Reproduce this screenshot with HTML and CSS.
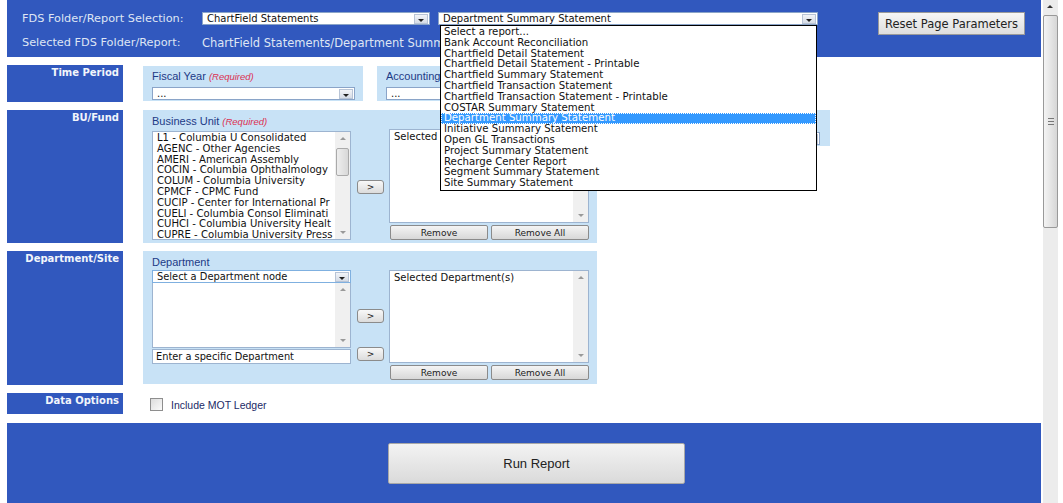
FILE: index.html
```html
<!DOCTYPE html>
<html lang="en">
<head>
  <meta charset="UTF-8" />
  <title>FDS Report Selection</title>
  <link rel="stylesheet" href="styles.css">
</head>
<body>
  <div class="page">
    <header class="top">
      <div class="top-row">
        <span class="top-label">FDS Folder/Report Selection:</span>
        <div class="combo folder-combo"><span class="combo-text">ChartField Statements</span><i class="arrow"></i></div>
        <div class="combo report-combo">
          <span class="combo-text">Department Summary Statement</span><i class="arrow"></i>
          <ul class="dropdown">
            <li>Select a report...</li>
            <li>Bank Account Reconciliation</li>
            <li>Chartfield Detail Statement</li>
            <li>Chartfield Detail Statement - Printable</li>
            <li>Chartfield Summary Statement</li>
            <li>Chartfield Transaction Statement</li>
            <li>Chartfield Transaction Statement - Printable</li>
            <li>COSTAR Summary Statement</li>
            <li class="picked">Department Summary Statement</li>
            <li>Initiative Summary Statement</li>
            <li>Open GL Transactions</li>
            <li>Project Summary Statement</li>
            <li>Recharge Center Report</li>
            <li>Segment Summary Statement</li>
            <li>Site Summary Statement</li>
          </ul>
        </div>
        <button class="reset">Reset Page Parameters</button>
      </div>
      <div class="top-row second">
        <span class="top-label">Selected FDS Folder/Report:</span>
        <span class="top-value">ChartField Statements/Department Summary Statement</span>
      </div>
    </header>

    <section class="group time-group">
      <div class="side-label">Time Period</div>
      <div class="panel small-panel">
        <div class="field-label">Fiscal Year <em>(Required)</em></div>
        <div class="combo field-combo"><span class="combo-text">...</span><i class="arrow"></i></div>
      </div>
      <div class="panel small-panel">
        <div class="field-label">Accounting Period <em>(Required)</em></div>
        <div class="combo field-combo"><span class="combo-text">...</span><i class="arrow"></i></div>
      </div>
    </section>

    <section class="group bu-group">
      <div class="side-label">BU/Fund</div>
      <div class="panel big-panel">
        <div class="field-label">Business Unit <em>(Required)</em></div>
        <div class="picker">
          <div class="list bu-list">
            <ul class="items">
              <li>L1 - Columbia U Consolidated</li>
              <li>AGENC - Other Agencies</li>
              <li>AMERI - American Assembly</li>
              <li>COCIN - Columbia Ophthalmology</li>
              <li>COLUM - Columbia University</li>
              <li>CPMCF - CPMC Fund</li>
              <li>CUCIP - Center for International Pr</li>
              <li>CUELI - Columbia Consol Eliminati</li>
              <li>CUHCI - Columbia University Healt</li>
              <li>CUPRE - Columbia University Press</li>
            </ul>
            <div class="vscroll"><span class="up"></span><span class="thumb bu-thumb"></span><span class="down"></span></div>
          </div>
          <button class="add bu-add">&gt;</button>
          <div class="chosen">
            <div class="list chosen-list bu-chosen">
              <ul class="items"><li>Selected Business Unit(s)</li></ul>
              <div class="vscroll"><span class="up"></span><span class="down"></span></div>
            </div>
            <div class="remove-row">
              <button class="remove">Remove</button>
              <button class="remove">Remove All</button>
            </div>
          </div>
        </div>
      </div>
      <div class="panel fund-panel">
        <div class="field-label">Fund</div>
        <div class="combo field-combo"><span class="combo-text">...</span><i class="arrow"></i></div>
      </div>
    </section>

    <section class="group dept-group">
      <div class="side-label">Department/Site</div>
      <div class="panel big-panel dept-panel">
        <div class="field-label">Department</div>
        <div class="picker">
          <div class="dept-left">
            <div class="combo node-combo"><span class="combo-text">Select a Department node</span><i class="arrow"></i></div>
            <div class="list dept-list">
              <ul class="items"></ul>
              <div class="vscroll"><span class="up"></span><span class="down"></span></div>
            </div>
            <div class="dept-input">Enter a specific Department</div>
          </div>
          <div class="add-col">
            <button class="add">&gt;</button>
            <button class="add">&gt;</button>
          </div>
          <div class="chosen">
            <div class="list chosen-list dept-chosen">
              <ul class="items"><li>Selected Department(s)</li></ul>
              <div class="vscroll"><span class="up"></span><span class="down"></span></div>
            </div>
            <div class="remove-row">
              <button class="remove">Remove</button>
              <button class="remove">Remove All</button>
            </div>
          </div>
        </div>
      </div>
    </section>

    <section class="group data-group">
      <div class="side-label">Data Options</div>
      <label class="check"><span class="box"></span>Include MOT Ledger</label>
    </section>

    <footer class="bottom">
      <button class="run">Run Report</button>
    </footer>
  </div>

  <div class="scrollbar">
    <span class="sb-up"></span>
    <span class="sb-thumb"><i></i></span>
  </div>
</body>
</html>
```

FILE: styles.css
```css
* { box-sizing: border-box; }
body { margin: 0; height: 503px; overflow: hidden; display: flex; background: #fff; font-family: "DejaVu Sans", Verdana, sans-serif; }
ul { list-style: none; margin: 0; padding: 0; }
button { font-family: "DejaVu Sans", Verdana, sans-serif; cursor: pointer; }

.page { width: 1041px; padding-left: 7px; flex: none; }

/* header */
.top { height: 57px; background: #3158be; padding: 12px 16px 0 15px; color: #dfe6f4; }
.top-row { display: flex; align-items: flex-start; height: 23px; }
.top-row.second { height: 14px; margin-top: 1px; }
.top-label { width: 180px; flex: none; font-size: 11.3px; line-height: 13px; white-space: nowrap; }
.second .top-label { line-height: 14px; }
.top-value { line-height: 14px; font-size: 11.5px; white-space: nowrap; }

.combo { position: relative; height: 13px; background: #fff; border: 1px solid #8aa4c8; display: flex; align-items: center; }
.combo-text { flex: 1; font-size: 10px; color: #111; padding-left: 4px; white-space: nowrap; overflow: hidden; line-height: 11px; }
.arrow { width: 14px; height: 10px; margin-right: 1px; border: 1px solid #b8c4d6; background: linear-gradient(#f2f4f8, #d6dce6); position: relative; flex: none; }
.arrow::after { content: ""; position: absolute; left: 3px; top: 4px; border-left: 3px solid transparent; border-right: 3px solid transparent; border-top: 3px solid #222; }
.folder-combo { width: 228px; }
.report-combo { width: 380px; margin-left: 8px; z-index: 5; }

.dropdown { position: absolute; top: 12px; left: 1px; right: 0; background: #fff; border: 1px solid #000; padding: 1px 0 1px; }
.dropdown li { font-size: 10.2px; line-height: 10.8px; height: 10.8px; padding-left: 3px; color: #111; white-space: nowrap; }
.dropdown li.picked { background: #3399ff; color: #fff; outline: 1px dotted #fff; outline-offset: -1px; }

.reset { margin-left: auto; width: 147px; height: 23px; border: 1px solid #9a9a9a; background: linear-gradient(#f6f6f6, #dedede); font-size: 11.5px; color: #222; padding: 0; }

/* rows */
.group { display: flex; gap: 20px; margin-top: 8px; align-items: flex-start; }
.side-label { width: 116px; flex: none; background: #3158be; color: #f2f5fb; font-weight: bold; font-size: 10px; text-align: right; padding: 2px 4px 0 0; }
.time-group .side-label { height: 37px; }
.bu-group .side-label { height: 133px; }
.dept-group .side-label { height: 134px; }
.data-group .side-label { height: 21px; }

.panel { background: #c8e2f6; padding: 4px 8px 0 9px; }
.field-label { font-family: "Liberation Sans", Arial, sans-serif; font-size: 11px; line-height: 14px; color: #1d3a86; white-space: nowrap; overflow: hidden; }
.field-label em { color: #dc3050; font-size: 9.5px; }

.small-panel { width: 220px; height: 35px; margin-top: 1px; padding-top: 3px; }
.time-group .small-panel + .small-panel { margin-left: -6px; }
.field-combo { margin-top: 3px; }

.big-panel { width: 454px; height: 133px; }
.fund-panel { width: 222px; height: 36px; margin-left: -9px; padding-top: 5px; padding-right: 10px; }

.picker { display: flex; align-items: flex-start; }
.list { position: relative; background: #fff; border: 1px solid #9db4d0; display: flex; }
.items { flex: 1; padding: 1px 0 0 4px; overflow: hidden; }
.items li { font-size: 10.1px; line-height: 10.8px; height: 10.8px; white-space: nowrap; color: #111; }
.vscroll { width: 15px; flex: none; background: #f0f0f0; position: relative; }
.vscroll .up, .vscroll .down { position: absolute; left: 5px; border-left: 3px solid transparent; border-right: 3px solid transparent; }
.vscroll .up { top: 5px; border-bottom: 3px solid #999; }
.vscroll .down { bottom: 5px; border-top: 3px solid #999; }
.thumb { position: absolute; left: 1px; right: 1px; border: 1px solid #aaa; border-radius: 2px; background: linear-gradient(90deg, #eee, #d8d8d8); }
.bu-thumb { top: 16px; height: 28px; }

.bu-list { width: 199px; height: 109px; margin-top: 2px; }
.add { width: 27px; height: 14px; margin-left: 6px; border: 1px solid #8b8b8b; border-radius: 3px; background: linear-gradient(#f8f8f8, #dcdcdc); font-size: 9px; line-height: 10px; padding: 0; color: #222; }
.bu-add { margin-top: 51px; }
.chosen { width: 200px; margin-left: 5px; }
.chosen-list .items li { font-size: 10px; line-height: 12px; }
.bu-chosen { height: 94px; }
.remove-row { display: flex; gap: 3px; margin-top: 2px; padding-left: 1px; }
.remove { flex: 1; height: 15px; border: 1px solid #8b8b8b; border-radius: 2px; background: linear-gradient(#f4f4f4, #d8d8d8); font-size: 9px; padding: 0; color: #222; }

.dept-left { width: 199px; margin-top: 1px; }
.node-combo { border-color: #7fb0e0; }
.node-combo .combo-text { font-size: 9.9px; }
.dept-list { height: 65px; border-top: none; }
.dept-input { height: 15px; margin-top: 1px; background: #fff; border: 1px solid #9db4d0; font-size: 9.8px; line-height: 13px; padding-left: 3px; color: #111; }
.add-col { display: flex; flex-direction: column; gap: 24px; padding-top: 40px; }
.dept-chosen { height: 93px; margin-top: 1px; }

.check { display: flex; align-items: center; gap: 8px; margin-top: 5px; margin-left: 7px; font-family: "Liberation Sans", Arial, sans-serif; font-size: 10.5px; color: #1c2a66; }
.box { width: 13px; height: 13px; border: 1px solid #8e8e8e; background: linear-gradient(135deg, #dcdcdc, #fafafa); }

/* footer */
.bottom { height: 90px; margin-top: 9px; background: #3158be; padding: 20px 0 0 381px; }
.run { width: 297px; height: 41px; border: 1px solid #a8a8a8; border-radius: 2px; background: linear-gradient(#f3f3f3, #dadada); font-family: "Liberation Sans", Arial, sans-serif; font-size: 13px; color: #222; }

/* window scrollbar */
.scrollbar { width: 15px; margin-left: 2px; background: #ececec; position: relative; flex: none; }
.sb-up { position: absolute; top: 5px; left: 4px; border-left: 3px solid transparent; border-right: 3px solid transparent; border-bottom: 3px solid #333; }
.sb-thumb { position: absolute; top: 15px; left: 0; right: 0; height: 213px; border: 1px solid #999; border-radius: 2px; background: linear-gradient(90deg, #f4f4f4, #d6d6d6); }
.sb-thumb i { position: absolute; left: 4px; top: 102px; width: 6px; height: 7px; border-top: 1px solid #777; border-bottom: 1px solid #777; }
.sb-thumb i::after { content: ""; position: absolute; left: 0; right: 0; top: 2px; border-top: 1px solid #777; }
```
